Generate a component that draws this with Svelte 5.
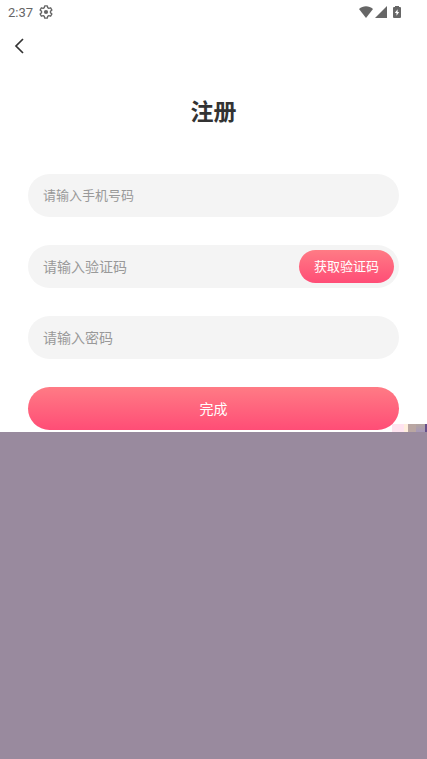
<script>
  let phone = "";
  let code = "";
  let password = "";
</script>

<div class="page">
  <div class="status-bar">
    <span class="time">2:37</span>
    <svg class="gear" viewBox="0 0 24 24" width="14" height="14">
      <path
        d="M9.8 1.5h4.4l.7 3.1 1.9 1.1 3.1-.9 2.2 3.8-2.4 2.3v2.2l2.4 2.3-2.2 3.8-3.1-.9-1.9 1.1-.7 3.1H9.8l-.7-3.1-1.9-1.1-3.1.9-2.2-3.8 2.4-2.3v-2.2L1.9 8.6l2.2-3.8 3.1.9 1.9-1.1z"
        fill="none"
        stroke="#666"
        stroke-width="2.4"
        stroke-linejoin="round"
      />
      <circle cx="12" cy="12" r="3.6" fill="#666" />
    </svg>
    <div class="system-icons">
      <svg viewBox="0 0 14 12" width="14" height="12">
        <path d="M0 3C4-.6 10-.6 14 3L7 12z" fill="#666" />
      </svg>
      <svg viewBox="0 0 12 12" width="12" height="12">
        <path d="M12 0v12H0z" fill="#666" />
      </svg>
      <svg class="battery" viewBox="0 0 8 12" width="8" height="12">
        <path
          d="M2 0h4v1h1q1 0 1 1v9q0 1-1 1H1q-1 0-1-1V2q0-1 1-1h1z"
          fill="#666"
        />
        <path d="M4.6 3.2 1.8 7h1.7v2.8L6.2 6H4.6z" fill="#fff" />
      </svg>
    </div>
  </div>

  <header>
    <button class="back-btn" aria-label="返回">
      <svg viewBox="0 0 10 16" width="10" height="16">
        <path d="M9 1 2 8l7 7" fill="none" stroke="#333" stroke-width="1.7" />
      </svg>
    </button>
  </header>

  <h1>注册</h1>

  <form on:submit|preventDefault>
    <div class="field phone">
      <input
        type="tel"
        aria-label="手机号码"
        placeholder="请输入手机号码"
        bind:value={phone}
      />
    </div>
    <div class="field">
      <input
        type="text"
        aria-label="验证码"
        placeholder="请输入验证码"
        bind:value={code}
      />
      <button type="button" class="code-btn">获取验证码</button>
    </div>
    <div class="field">
      <input
        type="password"
        aria-label="密码"
        placeholder="请输入密码"
        bind:value={password}
      />
    </div>
    <button type="submit" class="submit-btn">完成</button>
  </form>

  <div class="panel">
    <div class="blocks">
      <span class="pale"></span>
      <span class="cream"></span>
      <span class="tan"></span>
      <span class="lilac"></span>
      <span class="dark"></span>
    </div>
  </div>
</div>

<style>
  :global(body) {
    margin: 0;
    background: #fff;
  }

  .page {
    display: flex;
    flex-direction: column;
    min-height: 100vh;
    font-family: Roboto, "Noto Sans CJK SC", sans-serif;
    color: #333;
  }

  .status-bar {
    display: flex;
    align-items: center;
    height: 23px;
    padding: 0 26px 0 8px;
    color: #666;
  }

  .time {
    padding-top: 2px;
    font-size: 13px;
    line-height: 22px;
  }

  .gear {
    margin-left: 6px;
  }

  .system-icons {
    display: flex;
    gap: 2px;
    margin-left: auto;
  }

  .battery {
    margin-left: 4px;
  }

  header {
    display: flex;
    align-items: center;
    height: 46px;
    padding: 0 8px;
  }

  button {
    padding: 0;
    border: none;
    font-family: inherit;
    cursor: pointer;
  }

  .back-btn {
    display: flex;
    padding: 6px;
    background: none;
  }

  h1 {
    margin: 26px 0 43px;
    font-size: 23px;
    font-weight: bold;
    line-height: 36px;
    text-align: center;
  }

  form {
    display: flex;
    flex-direction: column;
    gap: 28px;
    padding: 0 28px 2px;
  }

  .field {
    display: flex;
    align-items: center;
    height: 43px;
    padding: 0 5px 0 15px;
    border-radius: 22px;
    background: #f4f4f4;
  }

  input {
    flex: 1;
    min-width: 0;
    padding: 0;
    border: none;
    outline: none;
    background: none;
    font-family: inherit;
    font-size: 14px;
    color: #333;
  }

  .phone input {
    font-size: 13px;
  }

  input::placeholder {
    color: #999;
    opacity: 1;
  }

  .code-btn,
  .submit-btn {
    padding-bottom: 2px;
    background: linear-gradient(#ff7b85, #ff4d76);
    color: #fff;
  }

  .code-btn {
    width: 95px;
    height: 33px;
    border-radius: 17px;
    font-size: 13px;
  }

  .submit-btn {
    height: 43px;
    border-radius: 22px;
    font-size: 14px;
  }

  .panel {
    position: relative;
    flex: 1;
    background: #998a9e;
  }

  /* strip of colour blocks resting on the panel's top edge */
  .blocks {
    position: absolute;
    right: 0;
    bottom: 100%;
    display: flex;
    height: 8px;
  }

  .pale {
    width: 12px;
    background: #ffe3f0;
  }

  .cream {
    width: 4px;
    background: #ffeedd;
  }

  .tan {
    width: 8px;
    background: #b9a6a2;
  }

  .lilac {
    width: 9px;
    background: linear-gradient(#b3a59f, #a698b8);
  }

  .dark {
    width: 2px;
    background: #65508a;
  }
</style>
